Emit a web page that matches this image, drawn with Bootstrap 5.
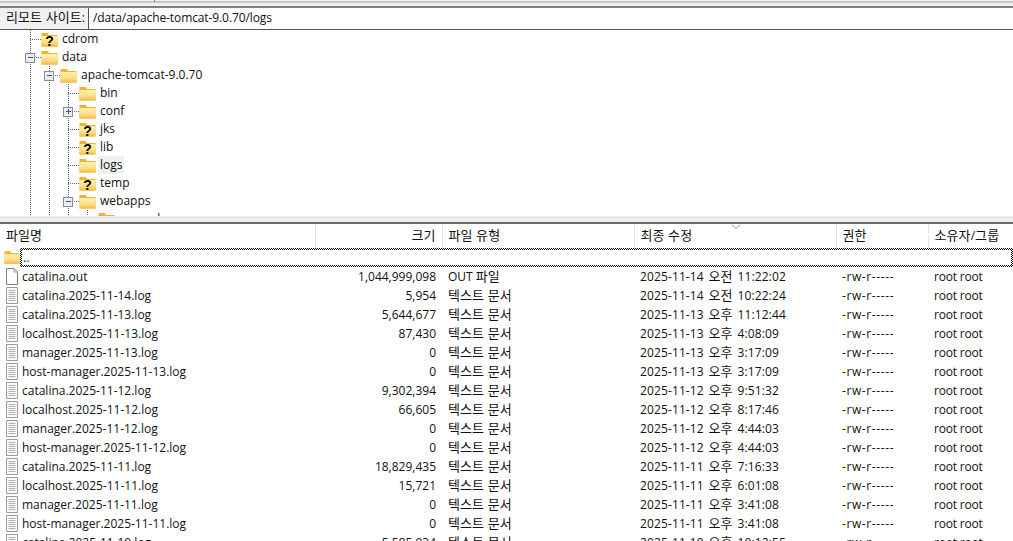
<!DOCTYPE html>
<html lang="ko">
<head>
  <meta charset="UTF-8" />
  <meta name="viewport" content="width=device-width, initial-scale=1.0"/>
  <title>리모트 사이트</title>
  <link rel="stylesheet" href="https://cdn.jsdelivr.net/npm/bootstrap@5.3.2/dist/css/bootstrap.min.css" />
  <style>
    html, body {
      height: 541px;
      overflow: hidden;
    }

    body {
      font-family: "Open Sans", "Noto Sans CJK KR", sans-serif;
      font-size: 12px;
      line-height: 18px;
      color: #111;
      background-color: #fff;
    }

    .ko {
      font-size: 13px;
      letter-spacing: .1px;
      line-height: 1;
    }

    .top-strip {
      height: 8px;
      background:
        linear-gradient(#8a8a8a, #8a8a8a) 154px 0 / 1px 2px no-repeat,
        linear-gradient(#f0f0f0 0 1px, #c8c8c8 1px 3px, #f0f0f0 3px 6px, #808080 6px 8px);
    }

    .site-bar {
      height: 22px;
      border-bottom: 1px solid #555;
    }

    .site-label {
      width: 89px;
      padding-left: 6px;
      background-color: #f0f0f0;
      border-right: 1px solid #555;
      white-space: nowrap;
      line-height: 20px;
    }

    .site-path {
      padding-left: 4px;
      line-height: 20px;
      letter-spacing: -.1px;
    }

    .tree-pane {
      height: 186px;
      overflow: hidden;
    }

    .tree-row {
      height: 18px;
      padding-left: 19px;
      white-space: nowrap;
    }

    .tree-guide {
      width: 19px;
      height: 18px;
      flex: none;
    }

    .tree-elbow {
      width: 22px;
      height: 18px;
      flex: none;
    }

    .tree-icon {
      width: 17px;
      height: 18px;
      flex: none;
    }

    .tree-text {
      margin-left: 2px;
      padding: 0 2px;
      height: 18px;
    }

    .tree-text.is-current {
      background-color: #f0f0f0;
    }

    .splitter {
      height: 8px;
      background: linear-gradient(#f0f0f0 0 1px, #dcdcdc 1px 2px, #f0f0f0 2px 6px, #696969 6px);
    }

    .file-table {
      table-layout: fixed;
      width: 1013px;
      border-collapse: collapse;
    }

    .file-table th {
      height: 24px;
      padding: 0 6px;
      font-weight: 400;
      border-right: 1px solid #e5e5e5;
      position: relative;
    }

    .file-table th:last-child {
      border-right: 0;
    }

    .file-table td {
      height: 19px;
      padding: 0 6px;
      white-space: nowrap;
      overflow: hidden;
    }

    .file-table td.name-cell {
      padding: 0 0 0 6px;
    }

    .file-table td.up-cell {
      padding: 0 0 0 4px;
    }

    .date-cell {
      word-spacing: 1.500px;
      letter-spacing: .12px;
    }

    .perm-cell {
      letter-spacing: .6px;
    }

    .owner-cell {
      letter-spacing: -.2px;
    }

    .up-box {
      height: 19px;
      padding-left: 1px;
      line-height: 15px;
      border: 2px solid transparent;
      background-image: linear-gradient(#fff, #fff), conic-gradient(#000 25%, #fff 0 50%, #000 0 75%, #fff 0);
      background-origin: padding-box, border-box;
      background-clip: padding-box, border-box;
      background-size: auto, 2px 2px;
    }

    .up-icon {
      width: 16px;
      height: 18px;
      flex: none;
    }

    .file-icon {
      width: 12px;
      height: 17px;
      margin-right: 4px;
      flex: none;
    }

    .sort-mark {
      position: absolute;
      top: 0;
      left: 96px;
    }
  </style>
</head>
<body>

  <svg width="0" height="0" class="d-block">
    <defs>
      <linearGradient id="folder-body" x1="0" y1="0" x2="0" y2="1">
        <stop offset="0" stop-color="#fff0b4"/>
        <stop offset=".55" stop-color="#fde08c"/>
        <stop offset="1" stop-color="#f3bb45"/>
      </linearGradient>
      <symbol id="folder" viewBox="0 0 17 18">
        <path d="M.5 3h6l1.500 2h8.500v11.500H.5z" fill="#f3b22e"/>
        <path d="M.5 6h16v10.500H.5z" fill="url(#folder-body)"/>
      </symbol>
      <symbol id="folder-q" viewBox="0 0 17 18">
        <use href="#folder"/>
        <text x="8.500" y="15.500" text-anchor="middle" font-family="Liberation Sans" font-weight="700" font-size="14" fill="#000">?</text>
      </symbol>
      <symbol id="doc" viewBox="0 0 12 17">
        <path d="M.5.5h7.500l3.500 3.500v12.500H.5z" fill="#fff" stroke="#7f7f7f"/>
        <path d="M8 .5V4h3.500" fill="none" stroke="#a5a5a5"/>
      </symbol>
      <symbol id="doc-text" viewBox="0 0 12 17">
        <path d="M.5.5h11v16H.5z" fill="#fafafa" stroke="#9a9a9a"/>
        <path d="M2.500 3.500h7M2.500 5.500h7M2.500 7.500h7M2.500 9.500h7M2.500 11.500h7M2.500 13.500h7" stroke="#b0b0b0"/>
      </symbol>
      <symbol id="box-base" viewBox="0 0 22 18">
        <rect x="6.500" y="5.500" width="9" height="9" fill="#e9edf3" stroke="#8b8b8b"/>
      </symbol>
    </defs>
  </svg>

  <div class="top-strip"></div>

  <div class="site-bar d-flex">
    <div class="site-label"><span class="ko">리모트 사이트</span>:</div>
    <div class="site-path flex-grow-1">/data/apache-tomcat-9.0.70/logs</div>
  </div>

  <div class="tree-pane" id="tree"></div>

  <div class="splitter"></div>

  <table class="file-table">
    <colgroup>
      <col style="width:315px"><col style="width:127px"><col style="width:192px"><col style="width:202px"><col style="width:92px"><col style="width:85px">
    </colgroup>
    <thead>
      <tr>
        <th><span class="ko">파일명</span></th>
        <th class="text-end"><span class="ko">크기</span></th>
        <th><span class="ko">파일 유형</span></th>
        <th><span class="ko">최종 수정</span>
          <svg class="sort-mark" width="10" height="6"><path d="M1 1l4 3.500L9 1" fill="none" stroke="#9a9a9a"/></svg>
        </th>
        <th><span class="ko">권한</span></th>
        <th><span class="ko">소유자</span>/<span class="ko">그룹</span></th>
      </tr>
    </thead>
    <tbody id="files">
      <tr>
        <td colspan="6" class="up-cell">
          <div class="d-flex">
            <svg class="up-icon" viewBox="0 0 17 18"><use href="#folder"/></svg>
            <div class="up-box flex-grow-1">..</div>
          </div>
        </td>
      </tr>
    </tbody>
  </table>

  <script>
    // depth, label, icon, toggle (''|'-'|'+')
    const tree = [
      [0, 'cdrom', 'folder-q', ''],
      [0, 'data', 'folder', '-'],
      [1, 'apache-tomcat-9.0.70', 'folder', '-'],
      [2, 'bin', 'folder', ''],
      [2, 'conf', 'folder', '+'],
      [2, 'jks', 'folder-q', ''],
      [2, 'lib', 'folder-q', ''],
      [2, 'logs', 'folder', ''],
      [2, 'temp', 'folder-q', ''],
      [2, 'webapps', 'folder', '-'],
      [3, 'examples', 'folder', '']
    ];

    const DOTS = 'M11.500 0v18';

    function elbow(toggle) {
      let inner = `<path d="${DOTS}M11 9.500h11" fill="none" stroke="#666" stroke-dasharray="1 1"/>`;
      if (toggle) {
        inner += '<use href="#box-base" width="22" height="18"/>';
        inner += '<path d="M9 9.500h5" stroke="#3b4f9a"/>';
        if (toggle === '+') inner += '<path d="M11.500 7v5" stroke="#3b4f9a"/>';
      }
      return `<svg class="tree-elbow" viewBox="0 0 22 18">${inner}</svg>`;
    }

    document.getElementById('tree').innerHTML = tree.map(([depth, label, icon, toggle]) => {
      let guides = '';
      for (let i = 0; i < depth; i++) {
        guides += `<svg class="tree-guide" viewBox="0 0 19 18"><path d="${DOTS}" stroke="#666" stroke-dasharray="1 1"/></svg>`;
      }
      const current = label === 'logs' ? ' is-current' : '';
      return `<div class="tree-row d-flex">${guides}${elbow(toggle)}` +
        `<svg class="tree-icon"><use href="#${icon}"/></svg>` +
        `<span class="tree-text${current}">${label}</span></div>`;
    }).join('');

    const ko = s => s.replace(/[가-힣]+( [가-힣]+)*/g, m => `<span class="ko">${m}</span>`);

    const TXT = '텍스트 문서';
    const files = [
      ['catalina.out', '1,044,999,098', 'OUT 파일', '2025-11-14 오전 11:22:02'],
      ['catalina.2025-11-14.log', '5,954', TXT, '2025-11-14 오전 10:22:24'],
      ['catalina.2025-11-13.log', '5,644,677', TXT, '2025-11-13 오후 11:12:44'],
      ['localhost.2025-11-13.log', '87,430', TXT, '2025-11-13 오후 4:08:09'],
      ['manager.2025-11-13.log', '0', TXT, '2025-11-13 오후 3:17:09'],
      ['host-manager.2025-11-13.log', '0', TXT, '2025-11-13 오후 3:17:09'],
      ['catalina.2025-11-12.log', '9,302,394', TXT, '2025-11-12 오후 9:51:32'],
      ['localhost.2025-11-12.log', '66,605', TXT, '2025-11-12 오후 8:17:46'],
      ['manager.2025-11-12.log', '0', TXT, '2025-11-12 오후 4:44:03'],
      ['host-manager.2025-11-12.log', '0', TXT, '2025-11-12 오후 4:44:03'],
      ['catalina.2025-11-11.log', '18,829,435', TXT, '2025-11-11 오후 7:16:33'],
      ['localhost.2025-11-11.log', '15,721', TXT, '2025-11-11 오후 6:01:08'],
      ['manager.2025-11-11.log', '0', TXT, '2025-11-11 오후 3:41:08'],
      ['host-manager.2025-11-11.log', '0', TXT, '2025-11-11 오후 3:41:08'],
      ['catalina.2025-11-10.log', '5,585,934', TXT, '2025-11-10 오후 10:12:55']
    ];

    const tbody = document.getElementById('files');
    files.forEach((f, i) => {
      const tr = document.createElement('tr');
      tr.innerHTML = `
        <td class="name-cell"><div class="d-flex align-items-center"><svg class="file-icon"><use href="#${i === 0 ? 'doc' : 'doc-text'}"/></svg>${f[0]}</div></td>
        <td class="text-end">${f[1]}</td>
        <td>${ko(f[2])}</td>
        <td class="date-cell">${ko(f[3])}</td>
        <td class="perm-cell">-rw-r-----</td>
        <td class="owner-cell">root root</td>
      `;
      tbody.appendChild(tr);
    });
  </script>
</body>
</html>
